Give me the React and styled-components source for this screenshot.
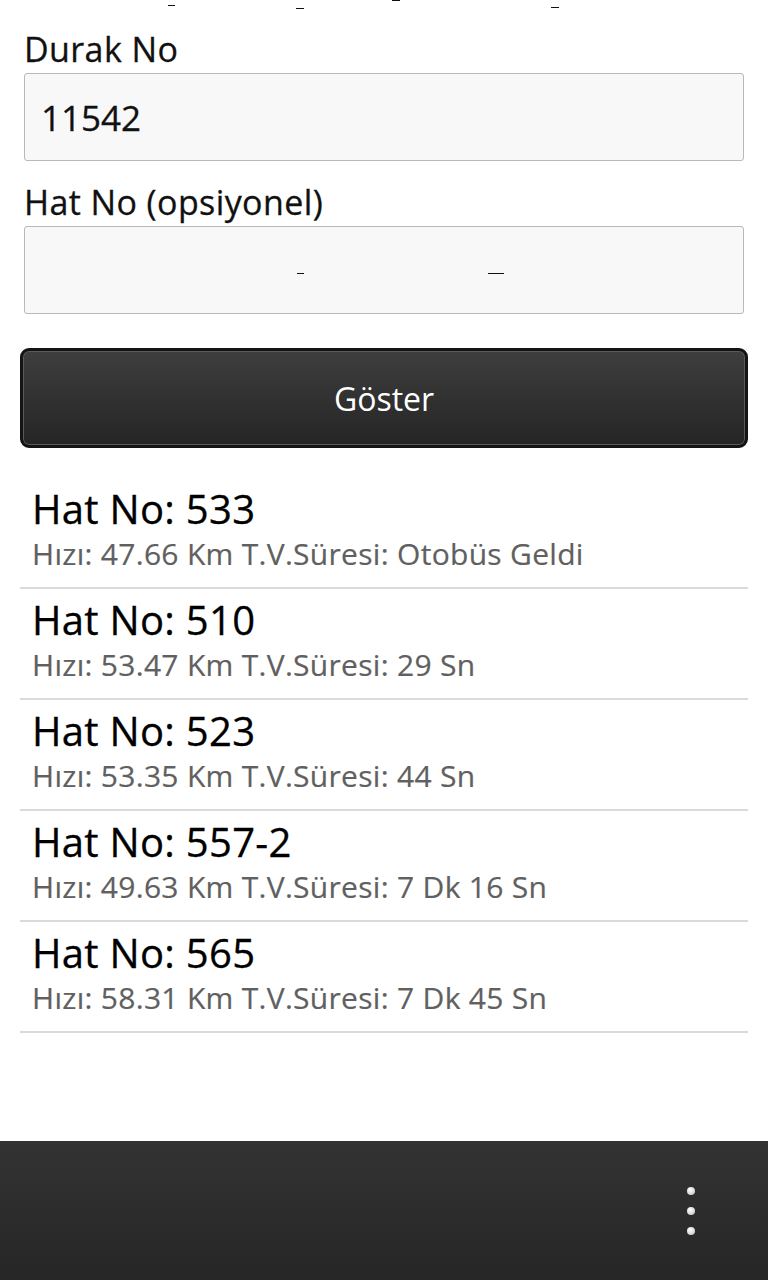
import React from 'react';
import styled, { createGlobalStyle } from 'styled-components';

const arrivals = [
  { line: '533', speed: '47.66', eta: 'Otobüs Geldi' },
  { line: '510', speed: '53.47', eta: '29 Sn' },
  { line: '523', speed: '53.35', eta: '44 Sn' },
  { line: '557-2', speed: '49.63', eta: '7 Dk 16 Sn' },
  { line: '565', speed: '58.31', eta: '7 Dk 45 Sn' },
];

// tiny render glitches visible in the capture
const topTicks = [
  { x: 168, y: 5, w: 7 },
  { x: 296, y: 8, w: 8 },
  { x: 392, y: 0, w: 8 },
  { x: 551, y: 7, w: 8 },
];

function App() {
  return (
    <>
      <GlobalStyle />
      <Screen>
        {topTicks.map((t, i) => (
          <Tick key={i} style={{ left: t.x, top: t.y, width: t.w }} />
        ))}
        <Form>
          <Label>Durak No</Label>
          <Input defaultValue="11542" />
          <Label $gap>Hat No (opsiyonel)</Label>
          <InputWrap>
            <Input defaultValue="" />
            <Tick style={{ left: 273, top: 47, width: 7 }} />
            <Tick style={{ left: 464, top: 47, width: 16 }} />
          </InputWrap>
        </Form>
        <ShowButton type="button">Göster</ShowButton>
        <List>
          {arrivals.map((a) => (
            <Item key={a.line}>
              <Title>Hat No: {a.line}</Title>
              <Detail>
                Hızı: {a.speed} Km T.V.Süresi: {a.eta}
              </Detail>
            </Item>
          ))}
        </List>
        <ActionBar>
          <MenuDots>
            <Dot />
            <Dot />
            <Dot />
          </MenuDots>
        </ActionBar>
      </Screen>
    </>
  );
}

export default App;

const GlobalStyle = createGlobalStyle`
  html, body {
    margin: 0;
    padding: 0;
    background: #fff;
  }
  body {
    font-family: "Open Sans", "Liberation Sans", sans-serif;
  }
  * {
    box-sizing: border-box;
  }
`;

const Screen = styled.div`
  position: relative;
  display: flex;
  flex-direction: column;
  min-height: 100vh;
  padding-top: 29px;
`;

const Tick = styled.span`
  position: absolute;
  height: 1px;
  background: #111;
`;

const Form = styled.div`
  display: flex;
  flex-direction: column;
  padding: 0 24px;
`;

const Label = styled.div`
  font-size: 34px;
  line-height: 40px;
  color: #111;
  letter-spacing: 0.4px;
  -webkit-text-stroke: 0.3px #111;
  margin-top: ${(p) => (p.$gap ? '21px' : '0')};
  margin-bottom: 4px;
`;

const InputWrap = styled.div`
  position: relative;
`;

const Input = styled.input`
  display: block;
  width: 100%;
  height: 88px;
  padding: 0 16px;
  font-family: "Open Sans", "Liberation Sans", sans-serif;
  font-size: 35px;
  color: #111;
  -webkit-text-stroke: 0.3px #111;
  background: #f8f8f8;
  border: 1px solid #b9b9b9;
  border-radius: 3px;
  outline: none;
`;

const ShowButton = styled.button`
  margin: 34px 20px 0;
  height: 100px;
  border: 3px solid #141414;
  border-radius: 9px;
  background: linear-gradient(#3e3e3e, #252525);
  box-shadow: inset 0 0 0 1px #5a5a5a;
  color: #fff;
  font-family: "Open Sans", "Liberation Sans", sans-serif;
  font-size: 32px;
`;

const List = styled.ul`
  list-style: none;
  margin: 30px 20px 0;
  padding: 0;
`;

const Item = styled.li`
  padding: 6px 12px 13px;
  border-bottom: 2px solid #d6dbde;
`;

const Title = styled.div`
  font-size: 40px;
  line-height: 50px;
  color: #000;
  letter-spacing: 0.3px;
  -webkit-text-stroke: 0.3px #000;
`;

const Detail = styled.div`
  font-size: 30px;
  line-height: 40px;
  color: #606060;
  letter-spacing: 0.3px;
  -webkit-text-stroke: 0.2px #606060;
`;

const ActionBar = styled.div`
  margin-top: auto;
  height: 139px;
  display: flex;
  justify-content: flex-end;
  align-items: center;
  padding-right: 73px;
  background: linear-gradient(#333, #262626);
`;

const MenuDots = styled.div`
  display: flex;
  flex-direction: column;
  gap: 12px;
`;

const Dot = styled.span`
  width: 8px;
  height: 8px;
  border-radius: 50%;
  background: radial-gradient(circle at 40% 35%, #fff, #bdbdbd);
`;
